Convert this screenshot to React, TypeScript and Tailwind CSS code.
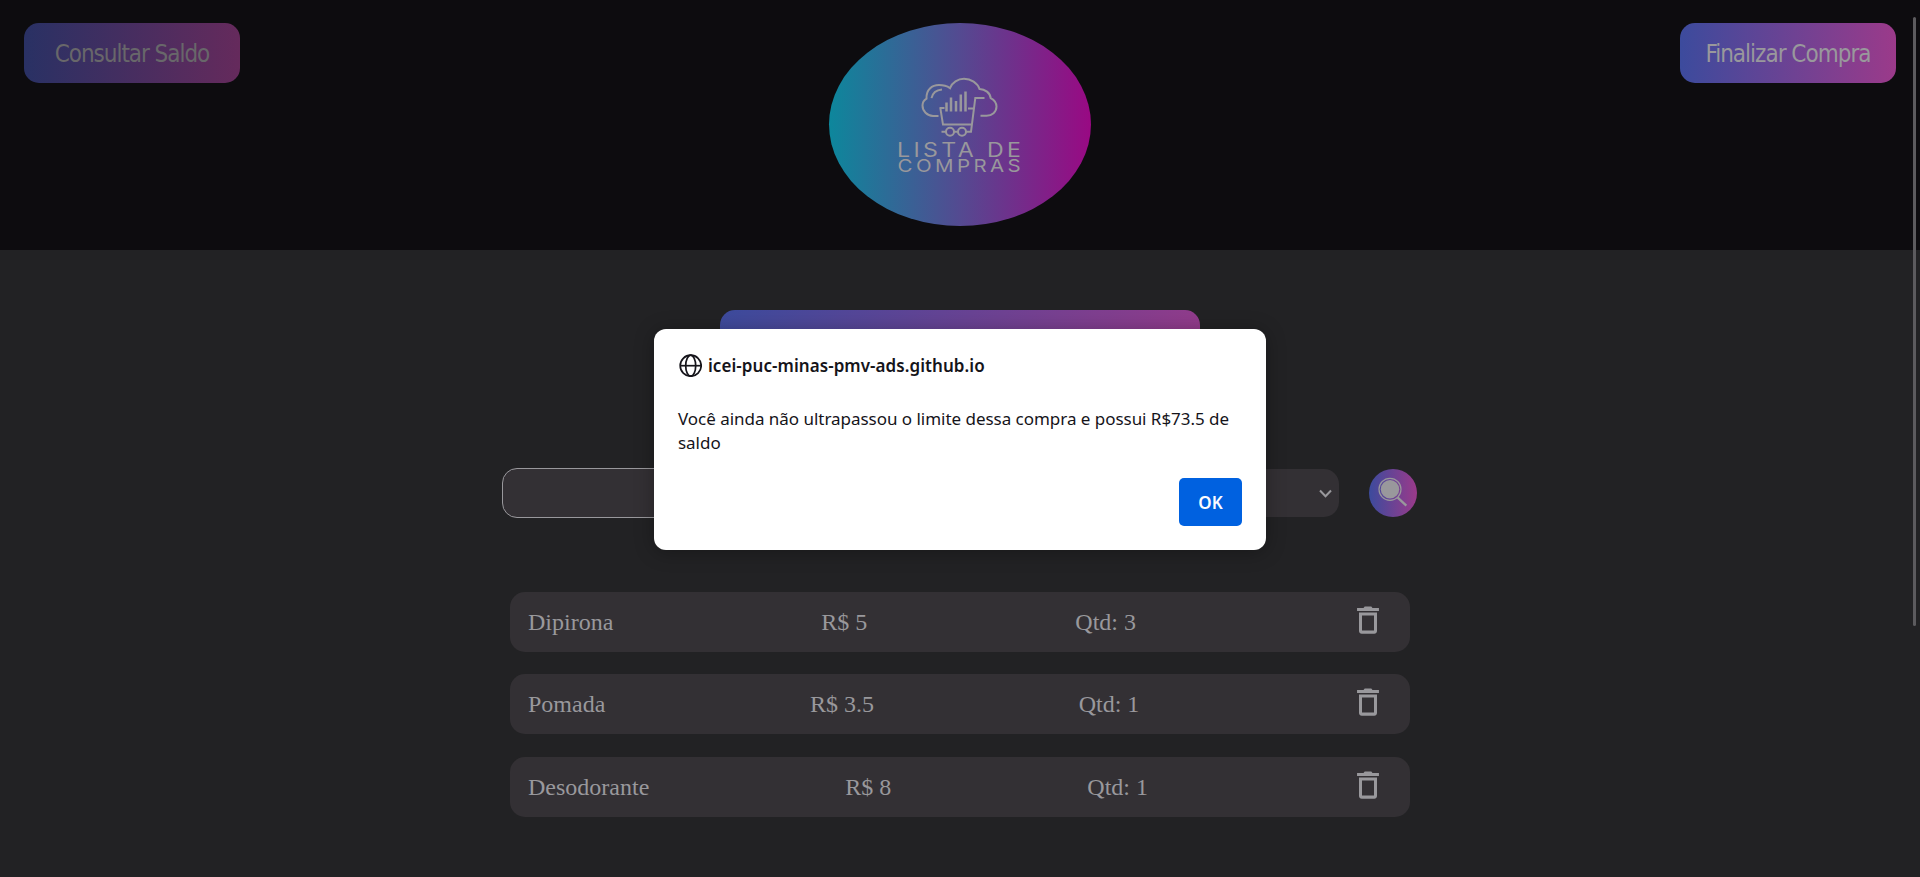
import React from "react";

type Item = { name: string; price: string; qty: string };

const items: Item[] = [
  { name: "Dipirona", price: "R$ 5", qty: "Qtd: 3" },
  { name: "Pomada", price: "R$ 3.5", qty: "Qtd: 1" },
  { name: "Desodorante", price: "R$ 8", qty: "Qtd: 1" },
];

function Logo() {
  return (
    <div className="flex h-[203px] w-[262px] items-center justify-center rounded-[50%] bg-linear-to-r/srgb from-[#0d879c] via-[#544a91] to-[#990983]">
      <svg width="262" height="203" viewBox="0 0 262 203" fill="none" stroke="#99989c" strokeWidth="2">
        <g transform="translate(0 9.600)">
          <path d="M109.500 83.300H104C98 83 93.500 78.500 93.500 73C93.500 70 95 67.500 97.500 66C97 57 103 52.500 110 52.500C114 52.500 118 53.500 121 55.500C123 50 129 46.200 135 46.200C142 46.200 148.500 50.500 150.500 56.300C156 56.300 161.300 60.500 161.700 65.500C165.500 67.500 167.500 70.500 167.500 74C167.500 79.500 163 83.200 157.500 83.200H151.500" />
          <path d="M102.500 65.500C103.500 60.500 107.500 57.300 113 56.800" />
          <path d="M110.500 75.300H115.500M111.300 75.300L114 92H143M155.500 65.300H146.300L142 99.200H112.500M139 76H145" />
          <path d="M117.500 70V79M122 65V79M127 68.500V79M131.800 62V79M136.500 59V79" strokeWidth="2.500" />
          <circle cx="121" cy="99.200" r="4" fill="#53498f" />
          <circle cx="133" cy="99.200" r="4" fill="#554990" />
        </g>
        <g fill="#99989c" stroke="none" className="font-['Inter']">
          <text transform="translate(68 133.500) scale(1.180 1)" fontSize="19.600" textLength="105" lengthAdjust="spacing">
            LISTA DE
          </text>
          <text transform="translate(68.500 149) scale(1.220 1)" fontSize="16.800" textLength="101" lengthAdjust="spacing">
            COMPRAS
          </text>
        </g>
      </svg>
    </div>
  );
}

function TrashIcon() {
  return (
    <svg width="36" height="36" viewBox="0 0 24 24" fill="#99989c">
      <path d="M6 19.400c0 1 .8 1.800 1.800 1.800h8.400c1 0 1.800-.8 1.800-1.800V7H6v12.400zM8 9h8v10H8V9zm7-5l-.8-1H9.800L9 4H4.700v2h14.600V4H15z" />
    </svg>
  );
}

function ListItem({ item }: { item: Item }) {
  return (
    <li className="flex h-[60px] items-center justify-between rounded-[15px] bg-[#333034] px-[18px] font-['Liberation_Serif'] text-2xl text-[#99989c]">
      <span>{item.name}</span>
      <span>{item.price}</span>
      <span>{item.qty}</span>
      <button className="flex w-12 justify-center pb-1">
        <TrashIcon />
      </button>
    </li>
  );
}

function Dialog() {
  return (
    <div
      role="dialog"
      className="absolute top-[329px] left-[654px] flex h-[221px] w-[612px] flex-col rounded-xl bg-white px-6 pt-6 pb-6 font-['Noto_Sans'] text-[17px] text-[#15141a] shadow-[0_2px_20px_rgba(0,0,0,0.3)]"
    >
      <div className="flex h-6 items-center gap-1.5">
        <svg width="24" height="24" viewBox="0 0 24 24" fill="none" stroke="#15141a" strokeWidth="1.700">
          <circle cx="12.700" cy="12.700" r="10.500" />
          <ellipse cx="12.700" cy="12.700" rx="5" ry="10.500" />
          <path d="M2.200 12.700H23.200" />
        </svg>
        <span className="pt-0.5 font-semibold tracking-[0.060px]">icei-puc-minas-pmv-ads.github.io</span>
      </div>
      <p className="mt-[30px] leading-6 tracking-[-0.030px]">
        Você ainda não ultrapassou o limite dessa compra e possui R$73.5 de
        <br />
        saldo
      </p>
      <button className="mt-auto h-12 w-[63px] self-end rounded-[5px] bg-[#0061e0] pt-0.5 font-semibold text-[#fbfbfe]">
        OK
      </button>
    </div>
  );
}

export default function App() {
  return (
    <div className="relative h-[877px] overflow-hidden bg-[#222224]">
      <header className="flex h-[250px] items-start justify-between bg-[#0d0c0f] px-6 pt-[23px] font-['DejaVu_Sans_Condensed'] text-2xl">
        <button className="h-[60px] w-[216px] rounded-[15px] bg-linear-to-r/srgb from-[#293164] to-[#652a5c] pt-0.5 tracking-[-1.050px] text-[#68676a]">
          Consultar Saldo
        </button>
        <Logo />
        <button className="h-[60px] w-[216px] rounded-[15px] bg-linear-to-r/srgb from-[#3c4b9d] to-[#9b3a8a] pt-0.5 tracking-[-1px] text-[#99989c]">
          Finalizar Compra
        </button>
      </header>

      <main className="flex flex-col items-center pt-[60px]">
        <div className="h-[60px] w-[480px] rounded-[15px] bg-linear-135/srgb from-[#3c4b9d] to-[#9b3a8a]" />
        <form className="mt-[98px] flex h-[50px] w-[916px] items-center pr-px">
          <div className="h-[50px] w-[420px] rounded-[15px] border border-[#99989c] bg-[#333034]" />
          <div className="ml-auto flex h-12 w-[380px] items-center justify-end rounded-[15px] bg-[#333034] pr-[7px]">
            <svg width="13" height="9" viewBox="0 0 13 9" fill="none" stroke="#99989c" strokeWidth="2">
              <path d="M1 1.500L6.500 7.200L12 1.500" />
            </svg>
          </div>
          <button className="ml-[30px] flex size-12 items-center justify-center rounded-full bg-linear-to-r/srgb from-[#3c4b9d] to-[#9b3a8a]">
            <svg width="48" height="48" viewBox="0 0 48 48" fill="none" stroke="#99989c">
              <circle cx="21" cy="20.300" r="9.200" fill="#99989c" stroke="none" />
              <circle cx="21" cy="20.300" r="11" strokeWidth="1.200" />
              <path d="M28.500 28.300L37.300 36.600" strokeWidth="2.300" />
            </svg>
          </button>
        </form>
        <ul className="mt-[74px] flex w-[900px] flex-col gap-[22.400px]">
          {items.map((item) => (
            <ListItem key={item.name} item={item} />
          ))}
        </ul>
      </main>

      <Dialog />
      <div className="absolute top-[17px] right-1 h-[609px] w-[3px] rounded-full bg-[#5c5b5e]" />
    </div>
  );
}
